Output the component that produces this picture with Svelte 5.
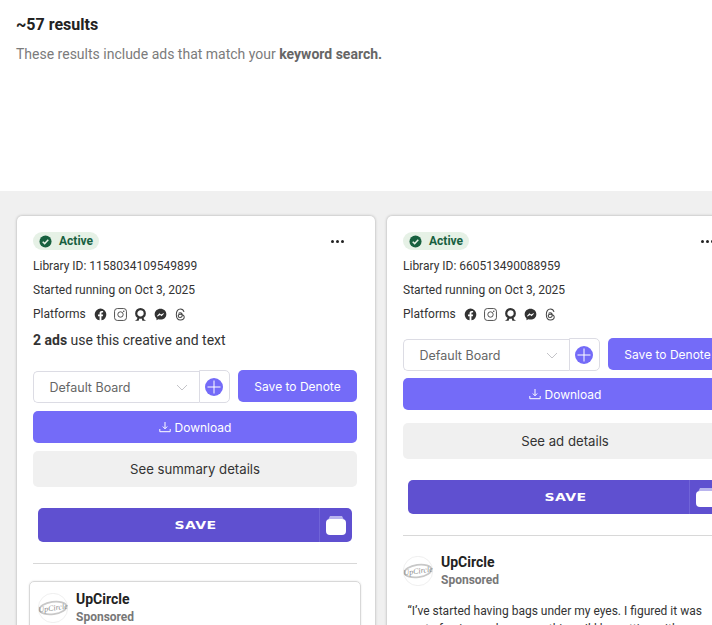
<script>
  const cards = [
    { id: '1158034109549899', ads: 2, details: 'See summary details', boxed: true },
    { id: '660513490088959', ads: 0, details: 'See ad details', boxed: false }
  ]
</script>

{#snippet brand()}
  <div class="brand">
    <svg class="avatar" viewBox="0 0 30 30" width="30" height="30">
      <circle cx="15" cy="15" r="14.7" fill="#fff" stroke="#e4e4e4" stroke-width="0.6" />
      <ellipse cx="15" cy="15" rx="13.6" ry="6.2" fill="none" stroke="#c8c8c8" stroke-width="1.7" transform="rotate(-8 15 15)" />
      <text x="15" y="17.5" text-anchor="middle" class="script" transform="rotate(-8 15 15)">UpCircle</text>
    </svg>
    <div>
      <div class="brand-name">UpCircle</div>
      <div class="sponsored">Sponsored</div>
    </div>
  </div>
{/snippet}

<main>
  <header>
    <h1>~57 results</h1>
    <p>These results include ads that match your <b>keyword search.</b></p>
  </header>

  <section class="grid">
    {#each cards as card}
      <article class="card" class:single={!card.ads}>
        <div class="top">
          <span class="badge">
            <svg viewBox="0 0 14 14" width="13" height="13">
              <circle cx="7" cy="7" r="6.5" fill="#17603f" />
              <path d="M4 7.2l2.1 2.1L10 5.2" fill="none" stroke="#e6f1e6" stroke-width="1.6" />
            </svg>
            Active
          </span>
          <span class="more"><i></i><i></i><i></i></span>
        </div>
        <div class="line">Library ID: {card.id}</div>
        <div class="line">Started running on Oct 3, 2025</div>
        <div class="line platforms">
          Platforms
          <span class="icons">
            <svg viewBox="0 0 14 14" width="13" height="13"><path fill="#333" d="M7 .6a6.4 6.4 0 0 0-1 12.7V8.9H4.3V7H6V5.6c0-1.6 1-2.5 2.4-2.5.7 0 1.4.1 1.4.1v1.6h-.8c-.8 0-1 .5-1 1V7h1.8l-.3 1.9H8v4.4A6.4 6.4 0 0 0 7 .6z" /></svg>
            <svg viewBox="0 0 14 14" width="13" height="13"><rect x=".6" y=".6" width="12.8" height="12.8" rx="3" fill="none" stroke="#444" stroke-width="1" /><circle cx="7" cy="7" r="2.9" fill="none" stroke="#444" stroke-width="1" /><circle cx="10.5" cy="3.5" r=".8" fill="#444" /></svg>
            <svg viewBox="0 0 14 14" width="13" height="13"><circle cx="7" cy="5.8" r="4.6" fill="none" stroke="#333" stroke-width="2.4" /><path fill="#333" d="M.8 13.6c1.6-.4 2.6-1.4 3-3.2h2c-.2 1.300-.4 2.200-.8 3.200zM13.200 13.600c-1.600-.4-2.600-1.400-3-3.200h-2c.2 1.300.4 2.200.8 3.200z" /></svg>
            <svg viewBox="0 0 14 14" width="13" height="13"><path fill="#333" d="M7 .8C3.400.8.700 3.400.700 6.800c0 1.800.8 3.300 2 4.400v2l1.900-1c.7.2 1.500.3 2.400.3 3.600 0 6.300-2.600 6.300-5.900S10.600.8 7 .8z" /><path fill="#fff" d="M3.200 8.700l2.600-3 1.700 1.400 2.800-1.500.6.400-2.700 3-1.700-1.400-2.800 1.500z" /></svg>
            <svg viewBox="0 0 14 14" width="13" height="13"><path fill="none" stroke="#444" stroke-width="1.1" d="M10.800 4.300C10.300 2.300 8.900 1 7 1 4.300 1 2.500 3 2.500 7s1.800 6 4.500 6c2.300 0 4-1.300 4-3.200 0-1.900-1.700-3-4-3-1.500 0-2.500.7-2.500 1.800 0 1 .9 1.700 2 1.700 1.500 0 2.400-1.100 2.400-2.700 0-1.500-.8-2.600-2.200-2.600-.8 0-1.400.3-1.800.9" /></svg>
          </span>
        </div>
        {#if card.ads}
          <div class="ads"><b>{card.ads} ads</b> use this creative and text</div>
        {/if}

        <div class="board-row">
          <div class="select">
            <span>Default Board</span>
            <svg viewBox="0 0 12 7" width="12" height="7"><path d="M1 1l5 5 5-5" fill="none" stroke="#c4c4c8" stroke-width="1" /></svg>
          </div>
          <div class="add">
            <svg viewBox="0 0 18 18" width="18" height="18">
              <circle cx="9" cy="9" r="9" fill="#746bf8" />
              <path d="M9 2.5v13M2.5 9h13" stroke="#fff" stroke-width="1" />
            </svg>
          </div>
          <button class="primary denote">Save to Denote</button>
        </div>
        <button class="primary download">
          <svg viewBox="0 0 12 12" width="12" height="12"><path d="M6 1v6.500M3.800 5.500L6 7.800l2.200-2.300M.8 8v2.700h10.400V8" fill="none" stroke="#fff" stroke-width="1" /></svg>
          Download
        </button>
        <button class="details">{card.details}</button>

        <div class="save">
          <span class="save-label"><span>SAVE</span></span>
          <span class="save-icon">
            <svg viewBox="0 0 20 19" width="20" height="19">
              <path d="M4 0h12l1.500 3h-15z" fill="#b9b4ee" />
              <rect y="3" width="20" height="16" rx="4" fill="#fff" />
            </svg>
          </span>
        </div>
        <hr />

        {#if card.boxed}
          <div class="creative">{@render brand()}</div>
        {:else}
          {@render brand()}
          <p class="copy">“I’ve started having bags under my eyes. I figured it was part of aging and summer things I’d be getting with</p>
        {/if}
      </article>
    {/each}
  </section>
</main>

<style>
  :global(body) {
    margin: 0;
    overflow: hidden;
    background: #f0f0f0;
  }

  main {
    height: 625px;
    overflow: hidden;
    font-family: Roboto, "Liberation Sans", sans-serif;
    color: #333;
  }

  header {
    height: 191px;
    box-sizing: border-box;
    padding: 16px 16px 0;
    background: #fff;
  }

  h1 {
    margin: 0;
    font-size: 16px;
    line-height: 18px;
    font-weight: 700;
    color: #222;
  }

  header p {
    margin: 11px 0 0;
    font-size: 14px;
    line-height: 18px;
    color: #7b7b7b;
  }

  header b {
    color: #666;
  }

  .grid {
    display: flex;
    align-items: flex-start;
    gap: 12px;
    padding: 25px 16.5px 0;
    width: 760px;
  }

  .card {
    flex: 0 0 358px;
    box-sizing: border-box;
    height: 500px;
    padding: 16px 17.5px 0 16.5px;
    background: #fff;
    border-radius: 5px;
    box-shadow: 0 0 3px rgba(0, 0, 0, 0.3);
  }

  .top {
    display: flex;
    align-items: center;
    justify-content: space-between;
    height: 18px;
  }

  .badge {
    display: inline-flex;
    align-items: center;
    gap: 7px;
    height: 18px;
    padding: 0 6px;
    border-radius: 9px;
    background: #e6f1e6;
    color: #17603f;
    font-size: 12px;
    font-weight: 700;
  }

  .more {
    display: flex;
    gap: 2px;
    margin-right: 13px;
  }

  .more i {
    width: 3px;
    height: 3px;
    border-radius: 50%;
    background: #222;
  }

  .line {
    margin-top: 7px;
    font-size: 12px;
    line-height: 18px;
    color: #333;
  }

  .line + .line {
    margin-top: 6px;
  }

  .platforms {
    display: flex;
    align-items: center;
  }

  .icons {
    display: flex;
    gap: 7px;
    margin-left: 8px;
  }

  .ads {
    margin-top: 8px;
    font-size: 14px;
    line-height: 18px;
  }

  .board-row {
    display: flex;
    align-items: flex-start;
    margin-top: 21px;
  }

  .single .board-row {
    margin-top: 15px;
  }

  .select {
    display: flex;
    align-items: center;
    justify-content: space-between;
    box-sizing: border-box;
    width: 166px;
    height: 32px;
    margin-top: 1px;
    padding: 0 11px 0 15.5px;
    border: 1px solid #dcdce4;
    border-right: none;
    border-radius: 5px 0 0 5px;
    font-family: Inter, sans-serif;
    font-size: 12.5px;
    color: #666;
  }

  .add {
    display: flex;
    align-items: center;
    justify-content: center;
    box-sizing: border-box;
    width: 31px;
    height: 33px;
    padding-right: 2px;
    border: 1px solid #dcdce4;
    border-radius: 0 5px 5px 0;
  }

  button {
    display: flex;
    align-items: center;
    justify-content: center;
    width: 100%;
    border: none;
    padding: 0;
    font-family: Inter, sans-serif;
    font-size: 13px;
  }

  .primary {
    background: #746bf8;
    color: #fff;
    border-radius: 5px;
  }

  .denote {
    width: 119px;
    height: 32px;
    margin-left: 8px;
    font-size: 12px;
  }

  .download {
    gap: 4px;
    height: 32px;
    margin-top: 8px;
    font-size: 12px;
  }

  .single .download {
    margin-top: 7px;
  }

  .details {
    height: 36px;
    margin-top: 8px;
    border-radius: 5px;
    background: #f0f0f0;
    color: #333;
    font-size: 13.2px;
  }

  .single .details {
    margin-top: 13px;
  }

  .save {
    display: flex;
    height: 34px;
    margin: 21px 5px 0;
    border-radius: 5px;
    background: #5f50d0;
    color: #fff;
  }

  .save-label {
    flex: 1;
    padding-left: 33px;
    text-align: center;
    font-family: "DejaVu Sans", sans-serif;
    font-size: 11px;
    font-weight: 700;
    line-height: 35px;
    letter-spacing: 0.3px;
  }

  .save-label span {
    display: inline-block;
    transform: scaleX(1.28);
  }

  .save-icon {
    display: flex;
    align-items: center;
    justify-content: center;
    width: 32px;
    border-left: 1px solid #7064d8;
  }

  hr {
    height: 1px;
    margin: 21px 0 0;
    border: none;
    background: #d8d8d8;
  }

  .creative {
    margin: 17px -4px 0;
    padding: 8px;
    height: 80px;
    border: 1px solid #d8d8d8;
    border-radius: 5px;
    box-shadow: 0 0 2px rgba(0, 0, 0, 0.12);
  }

  .brand {
    display: flex;
    align-items: center;
    gap: 8px;
  }

  .single .brand {
    margin-top: 17px;
  }

  .script {
    font-family: "Liberation Serif", serif;
    font-style: italic;
    font-size: 8px;
    fill: #888;
  }

  .brand-name {
    font-size: 14px;
    line-height: 18px;
    font-weight: 700;
    color: #222;
  }

  .sponsored {
    font-size: 12px;
    line-height: 18px;
    font-weight: 700;
    color: #777;
  }

  .copy {
    max-width: 300px;
    margin: 13px 0 0;
    padding-left: 4.5px;
    font-size: 12px;
    line-height: 18px;
    color: #333;
  }
</style>
